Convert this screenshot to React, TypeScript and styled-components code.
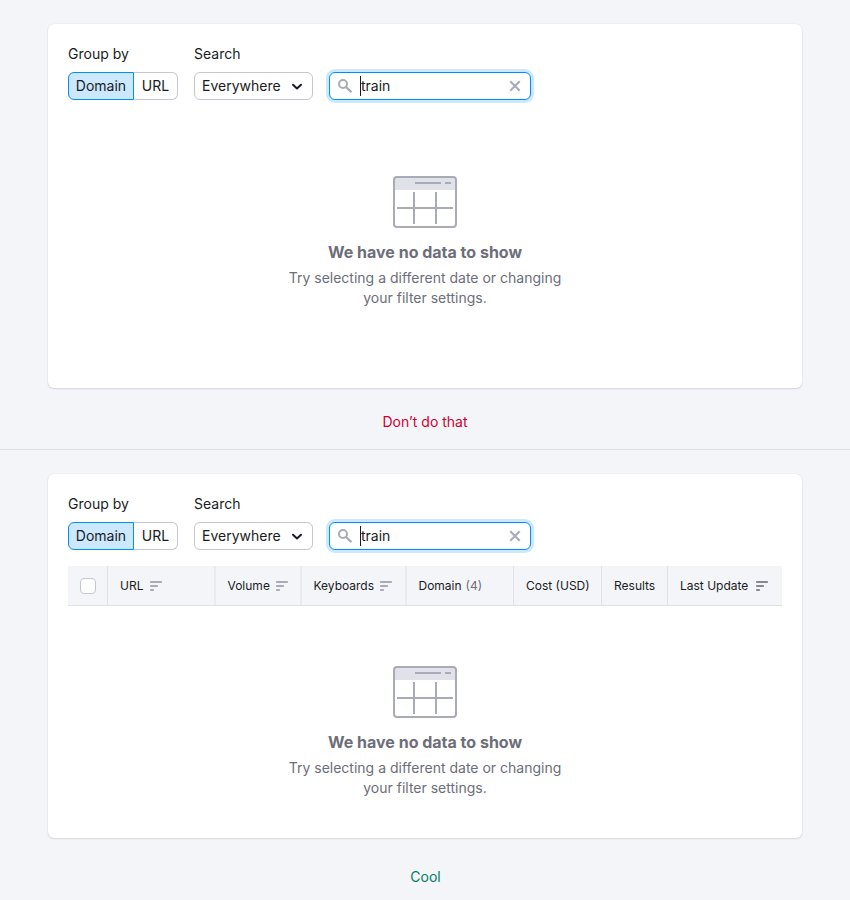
import React from "react";
import styled, { createGlobalStyle, css } from "styled-components";

const GlobalStyle = createGlobalStyle`
  * { box-sizing: border-box; }
  body {
    margin: 0;
    background: #f4f5f9;
    color: #191b23;
    font-family: Inter, "Liberation Sans", sans-serif;
    font-size: 14px;
    line-height: 20px;
  }
`;

const Example = styled.section<{ $divided?: boolean }>`
  height: 450px;
  padding: 24px 48px 0;
  ${(p) => p.$divided && css`border-bottom: 1px solid #e0e1e9;`}
`;

const Card = styled.div`
  height: 364px;
  padding: 20px;
  border-radius: 6px;
  background: #fff;
  box-shadow: 0 0 1px rgba(25, 27, 35, 0.16), 0 1px 2px rgba(25, 27, 35, 0.12);
`;

const Filters = styled.div`
  display: flex;
  align-items: flex-end;
  gap: 16px;
`;

const Field = styled.div`
  display: flex;
  flex-direction: column;
  gap: 8px;
`;

const Label = styled.label`
  letter-spacing: 0;
`;

const Pills = styled.div`
  display: flex;
  width: 110px;
  height: 28px;
`;

const Pill = styled.button<{ $selected?: boolean }>`
  height: 28px;
  padding: 0;
  font: inherit;
  color: inherit;
  background: #fff;
  border: 1px solid #c4c7cf;
  border-left: 0;
  border-radius: 0 6px 6px 0;
  flex: 1;
  ${(p) =>
    p.$selected &&
    css`
      flex: 0 0 66px;
      background: #cce8fe;
      border: 1px solid #008ff8;
      border-radius: 6px 0 0 6px;
    `}
`;

const Select = styled.button`
  display: flex;
  align-items: center;
  justify-content: space-between;
  width: 119px;
  height: 28px;
  padding: 0 7px;
  font: inherit;
  color: inherit;
  background: #fff;
  border: 1px solid #c4c7cf;
  border-radius: 6px;
`;

const SearchBox = styled.div`
  display: flex;
  align-items: center;
  width: 202px;
  height: 28px;
  padding: 0 7px;
  background: #fff;
  border: 1px solid #008ff8;
  border-radius: 6px;
  box-shadow: 0 0 0 3px #cce8fe;
`;

const Caret = styled.span`
  width: 1px;
  height: 20px;
  margin-left: 7px;
  background: #191b23;
`;

const Query = styled.span`
  flex: 1;
`;

const Icon = styled.svg`
  display: block;
  flex: none;
`;

const TableHead = styled.div`
  display: grid;
  grid-template-columns: 40px 108px 86px 105px 107px 88px 66px 114px;
  height: 40px;
  margin-top: 16px;
  background: #f4f5f9;
  border-bottom: 1px solid #e0e1e9;
  font-size: 12px;
  line-height: 16px;
`;

const HeadCell = styled.div<{ $wide?: boolean }>`
  display: flex;
  align-items: center;
  padding-left: 12px;
  white-space: nowrap;
  border-right: ${(p) => (p.$wide ? "2px solid #eaebf1" : "1px solid #e0e1e9")};
  &:last-child { border-right: 0; }
`;

const HeadName = styled.span<{ $shift?: number }>`
  margin-left: ${(p) => p.$shift ?? 0}px;
`;

const Checkbox = styled.span`
  width: 16px;
  height: 16px;
  background: #fff;
  border: 1px solid #c4c7cf;
  border-radius: 4px;
`;

const Count = styled.span`
  margin-left: 4px;
  color: #6c6e79;
`;

const Empty = styled.div<{ $top: number }>`
  display: flex;
  flex-direction: column;
  align-items: center;
  margin-top: ${(p) => p.$top}px;
  color: #6c6e79;
  text-align: center;
`;

const EmptyTitle = styled.h3`
  margin: 12px 0 4px;
  font-size: 16px;
  line-height: 24px;
  font-weight: 700;
`;

const EmptyText = styled.p`
  width: 290px;
  margin: 0;
`;

const Verdict = styled.p<{ $good?: boolean }>`
  margin: ${(p) => (p.$good ? 29 : 24)}px 0 0;
  padding-left: ${(p) => (p.$good ? 1 : 0)}px;
  text-align: center;
  color: ${(p) => (p.$good ? "#007c65" : "#d1002f")};
`;

const ChevronIcon = () => (
  <Icon width="16" height="16" viewBox="0 0 16 16" fill="none" stroke="#191b23" strokeWidth="2" strokeLinecap="round" strokeLinejoin="round">
    <path d="M4 6.8 8 10.5 12 6.8" />
  </Icon>
);

const SearchIcon = () => (
  <Icon width="16" height="16" viewBox="0 0 16 16" fill="none" stroke="#a9abb6" strokeWidth="2">
    <circle cx="6" cy="6" r="4" />
    <path d="m9 9 4.8 4.6" strokeWidth="2.2" strokeLinecap="round" />
  </Icon>
);

const ClearIcon = () => (
  <Icon width="16" height="16" viewBox="0 0 16 16" fill="none" stroke="#a9abb6" strokeWidth="2.1">
    <path d="m3.3 3.3 9.4 9.4M12.7 3.3l-9.4 9.4" />
  </Icon>
);

const SortMark = styled(Icon)<{ $gap: number }>`
  margin-left: ${(p) => p.$gap}px;
`;

const SortIcon = ({ active, gap }: { active?: boolean; gap: number }) => (
  <SortMark $gap={gap} width="14" height="12" viewBox="0 0 14 12" fill={active ? "#878992" : "#a9abb6"}>
    <rect x="1" y="1" width="12" height="2" rx="0.7" />
    <rect x="1" y="5" width="8" height="2" rx="0.7" />
    <rect x="1" y="9" width="4" height="2" rx="0.7" />
  </SortMark>
);

type Column = {
  name: string;
  count?: number;
  sortGap?: number;
  active?: boolean;
  wide?: boolean;
  shift?: number;
};

const columns: Column[] = [
  { name: "URL", sortGap: 5.5, wide: true },
  { name: "Volume", sortGap: 5, wide: true, shift: -0.5 },
  { name: "Keyboards", sortGap: 5.3, wide: true, shift: -0.5 },
  { name: "Domain", count: 4, shift: -0.5 },
  { name: "Cost (USD)" },
  { name: "Results" },
  { name: "Last Update", sortGap: 6.8, active: true },
];

const FilterBar = () => (
  <Filters>
    <Field>
      <Label>Group by</Label>
      <Pills>
        <Pill $selected>Domain</Pill>
        <Pill>URL</Pill>
      </Pills>
    </Field>
    <Field>
      <Label>Search</Label>
      <Select>
        Everywhere
        <ChevronIcon />
      </Select>
    </Field>
    <SearchBox>
      <SearchIcon />
      <Caret />
      <Query>train</Query>
      <ClearIcon />
    </SearchBox>
  </Filters>
);

const EmptyState = ({ top }: { top: number }) => (
  <Empty $top={top}>
    <Icon width="64" height="52" viewBox="0 0 64 52" fill="none" stroke="#a9abb6" strokeWidth="2">
      <path d="M1 14V4a3 3 0 0 1 3-3h56a3 3 0 0 1 3 3v10Z" fill="#e0e1e9" stroke="none" />
      <rect x="1" y="1" width="62" height="50" rx="3" />
      <path d="M22 7h26M52 7h6M21 16v32M43 16v32M4 32h56" />
    </Icon>
    <EmptyTitle>We have no data to show</EmptyTitle>
    <EmptyText>Try selecting a different date or changing your filter settings.</EmptyText>
  </Empty>
);

export default function App() {
  return (
    <>
      <GlobalStyle />
      <Example $divided>
        <Card>
          <FilterBar />
          <EmptyState top={76} />
        </Card>
        <Verdict>Don’t do that</Verdict>
      </Example>
      <Example>
        <Card>
          <FilterBar />
          <TableHead>
            <HeadCell>
              <Checkbox />
            </HeadCell>
            {columns.map((c) => (
              <HeadCell key={c.name} $wide={c.wide}>
                <HeadName $shift={c.shift}>{c.name}</HeadName>
                {c.count && <Count>({c.count})</Count>}
                {c.sortGap && <SortIcon gap={c.sortGap} active={c.active} />}
              </HeadCell>
            ))}
          </TableHead>
          <EmptyState top={60} />
        </Card>
        <Verdict $good>Cool</Verdict>
      </Example>
    </>
  );
}
